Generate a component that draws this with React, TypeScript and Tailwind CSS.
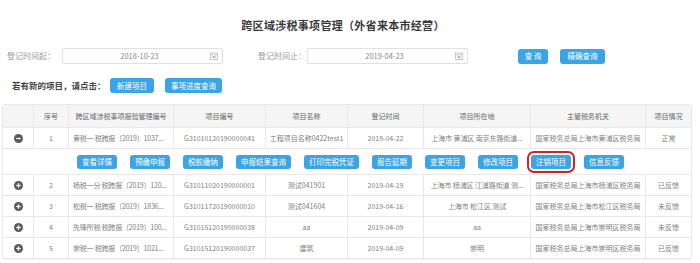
import React from 'react'

const font = { fontFamily: '"Noto Sans CJK SC", "Noto Sans", sans-serif' }

interface Row {
  no: string
  code: string
  id: string
  name: string
  date: string
  place: string
  office: string
  status: string
}

const rows: Row[] = [
  { no: '1', code: '黄税一 税跨报〔2019〕1037...', id: 'G31010120190000041', name: '工程项目名称0422test1', date: '2019-04-22', place: '上海市 黄浦区 南京东路街道...', office: '国家税务总局上海市黄浦区税务局', status: '正常' },
  { no: '2', code: '杨税一分 税跨报〔2019〕120...', id: 'G31011020190000001', name: '测试041901', date: '2019-04-19', place: '上海市 杨浦区 江浦路街道 测...', office: '国家税务总局上海市杨浦区税务局', status: '已反馈' },
  { no: '3', code: '松税一 税跨报〔2019〕1836...', id: 'G31011720190000010', name: '测试041604', date: '2019-04-16', place: '上海市 松江区 测试', office: '国家税务总局上海市松江区税务局', status: '未反馈' },
  { no: '4', code: '先锋所税 税跨报〔2019〕100...', id: 'G31015120190000038', name: 'aa', date: '2019-04-09', place: 'aa', office: '国家税务总局上海市崇明区税务局', status: '未反馈' },
  { no: '5', code: '崇税一 税跨报〔2019〕1021...', id: 'G31015120190000037', name: '建筑', date: '2019-04-09', place: '崇明', office: '国家税务总局上海市崇明区税务局', status: '已反馈' },
]

const actions = ['查看详情', '预缴申报', '税款缴纳', '申报结果查询', '打印完税凭证', '报告延期', '变更项目', '修改项目', '注销项目', '信息反馈']

const headers = ['', '序号', '跨区域涉税事项报验管理编号', '项目编号', '项目名称', '登记时间', '项目所在地', '主管税务机关', '项目情况']

const cols = 'grid grid-cols-[31px_35px_105px_92px_82px_76px_107px_115px_45px]'

function BlueButton({ label, className = '' }: { label: string; className?: string }) {
  return (
    <button className={`h-[14px] px-[5px] rounded-[3px] bg-[#3aa4e4] text-white text-[7.5px] leading-none whitespace-nowrap ${className}`}>
      {label}
    </button>
  )
}

function CalendarIcon() {
  return (
    <svg width="8" height="8" viewBox="0 0 8 8" className="text-[#bbb]">
      <rect x="0.5" y="1" width="7" height="6.5" fill="none" stroke="currentColor" strokeWidth="0.8" />
      <line x1="0.5" y1="2.8" x2="7.5" y2="2.8" stroke="currentColor" strokeWidth="0.8" />
      <rect x="2.5" y="4" width="3" height="2" fill="currentColor" />
    </svg>
  )
}

function ExpandIcon({ open }: { open: boolean }) {
  return (
    <svg width="9" height="9" viewBox="0 0 10 10">
      <circle cx="5" cy="5" r="5" fill="#5a5a5a" />
      <line x1="2.5" y1="5" x2="7.5" y2="5" stroke="#fff" strokeWidth="1.4" />
      {!open && <line x1="5" y1="2.5" x2="5" y2="7.5" stroke="#fff" strokeWidth="1.4" />}
    </svg>
  )
}

function DateInput({ value }: { value: string }) {
  return (
    <div className="w-[161px] h-[16px] border border-[#e0e0e0] rounded-[2px] flex items-center bg-white">
      <span className="flex-1 text-center text-[7.5px] text-[#888] pl-[6px]">{value}</span>
      <span className="pr-[4px] flex items-center"><CalendarIcon /></span>
    </div>
  )
}

function DataRow({ row }: { row: Row }) {
  const cell = 'h-full flex items-center justify-center border-r border-[#e8e8e8] overflow-hidden whitespace-nowrap'
  return (
    <div className={`${cols} h-[21px] border-t border-[#e8e8e8] text-[7px] text-[#808080]`}>
      <div className={cell}><ExpandIcon open={row.no === '1'} /></div>
      <div className={cell}>{row.no}</div>
      <div className={`${cell} !justify-start pl-[4px] tracking-[-0.2px]`}>{row.code}</div>
      <div className={cell}>{row.id}</div>
      <div className={cell}>{row.name}</div>
      <div className={cell}>{row.date}</div>
      <div className={`${cell} tracking-[-0.1px]`}>{row.place}</div>
      <div className={cell}>{row.office}</div>
      <div className="h-full flex items-center justify-center">{row.status}</div>
    </div>
  )
}

export default function App() {
  return (
    <div className="w-[700px] h-[263px] bg-white overflow-hidden" style={font}>
      {/* 标题 */}
      <div className="pt-[18px] h-[40px] flex justify-center pr-[14px]">
        <h1 className="text-[11px] font-semibold text-[#3a3a3a] leading-[14px] tracking-[0.3px]">跨区域涉税事项管理（外省来本市经营）</h1>
      </div>

      {/* 查询条件 */}
      <div className="flex items-center h-[16px] mt-[8px] pl-[7px]">
        <span className="w-[55px] text-[8px] text-[#999] whitespace-nowrap">登记时间起：</span>
        <DateInput value="2018-10-23" />
        <span className="ml-[35px] w-[49px] text-[8px] text-[#999] whitespace-nowrap">登记时间止：</span>
        <DateInput value="2019-04-23" />
        <BlueButton label="查 询" className="ml-[50px] w-[30px] h-[15px]" />
        <BlueButton label="精确查询" className="ml-[12px] w-[45px] h-[15px]" />
      </div>

      <div className="flex items-center h-[15px] mt-[14px] pl-[12px]">
        <span className="w-[98px] text-[8.5px] font-bold text-[#444] whitespace-nowrap">若有新的项目，请点击：</span>
        <BlueButton label="新建项目" className="w-[44px] h-[15px]" />
        <BlueButton label="事项进度查询" className="ml-[11px] w-[57px] h-[15px]" />
      </div>

      {/* 列表 */}
      <div className="mt-[11px] ml-[2px] w-[690px] border border-[#e8e8e8] rounded-[3px] shadow-[0_1px_2px_rgba(0,0,0,0.06)]">
        <div className={`${cols} h-[22px] bg-[#f5f5f5] text-[7px] text-[#666]`}>
          {headers.map((h, i) => (
            <div key={i} className={`h-full flex items-center justify-center whitespace-nowrap ${i < headers.length - 1 ? 'border-r border-[#e8e8e8]' : ''}`}>
              {h}
            </div>
          ))}
        </div>
        <DataRow row={rows[0]} />
        <div className="h-[26px] border-t border-[#e8e8e8] flex items-center gap-[13px] pl-[74px]">
          {actions.map((a) => (
            <BlueButton
              key={a}
              label={a}
              className={a === '注销项目' ? 'rounded-[2px] outline-solid outline-2 outline-offset-[2px] outline-[#c3262b]' : ''}
            />
          ))}
        </div>
        {rows.slice(1).map((r) => (
          <DataRow key={r.no} row={r} />
        ))}
      </div>
    </div>
  )
}
